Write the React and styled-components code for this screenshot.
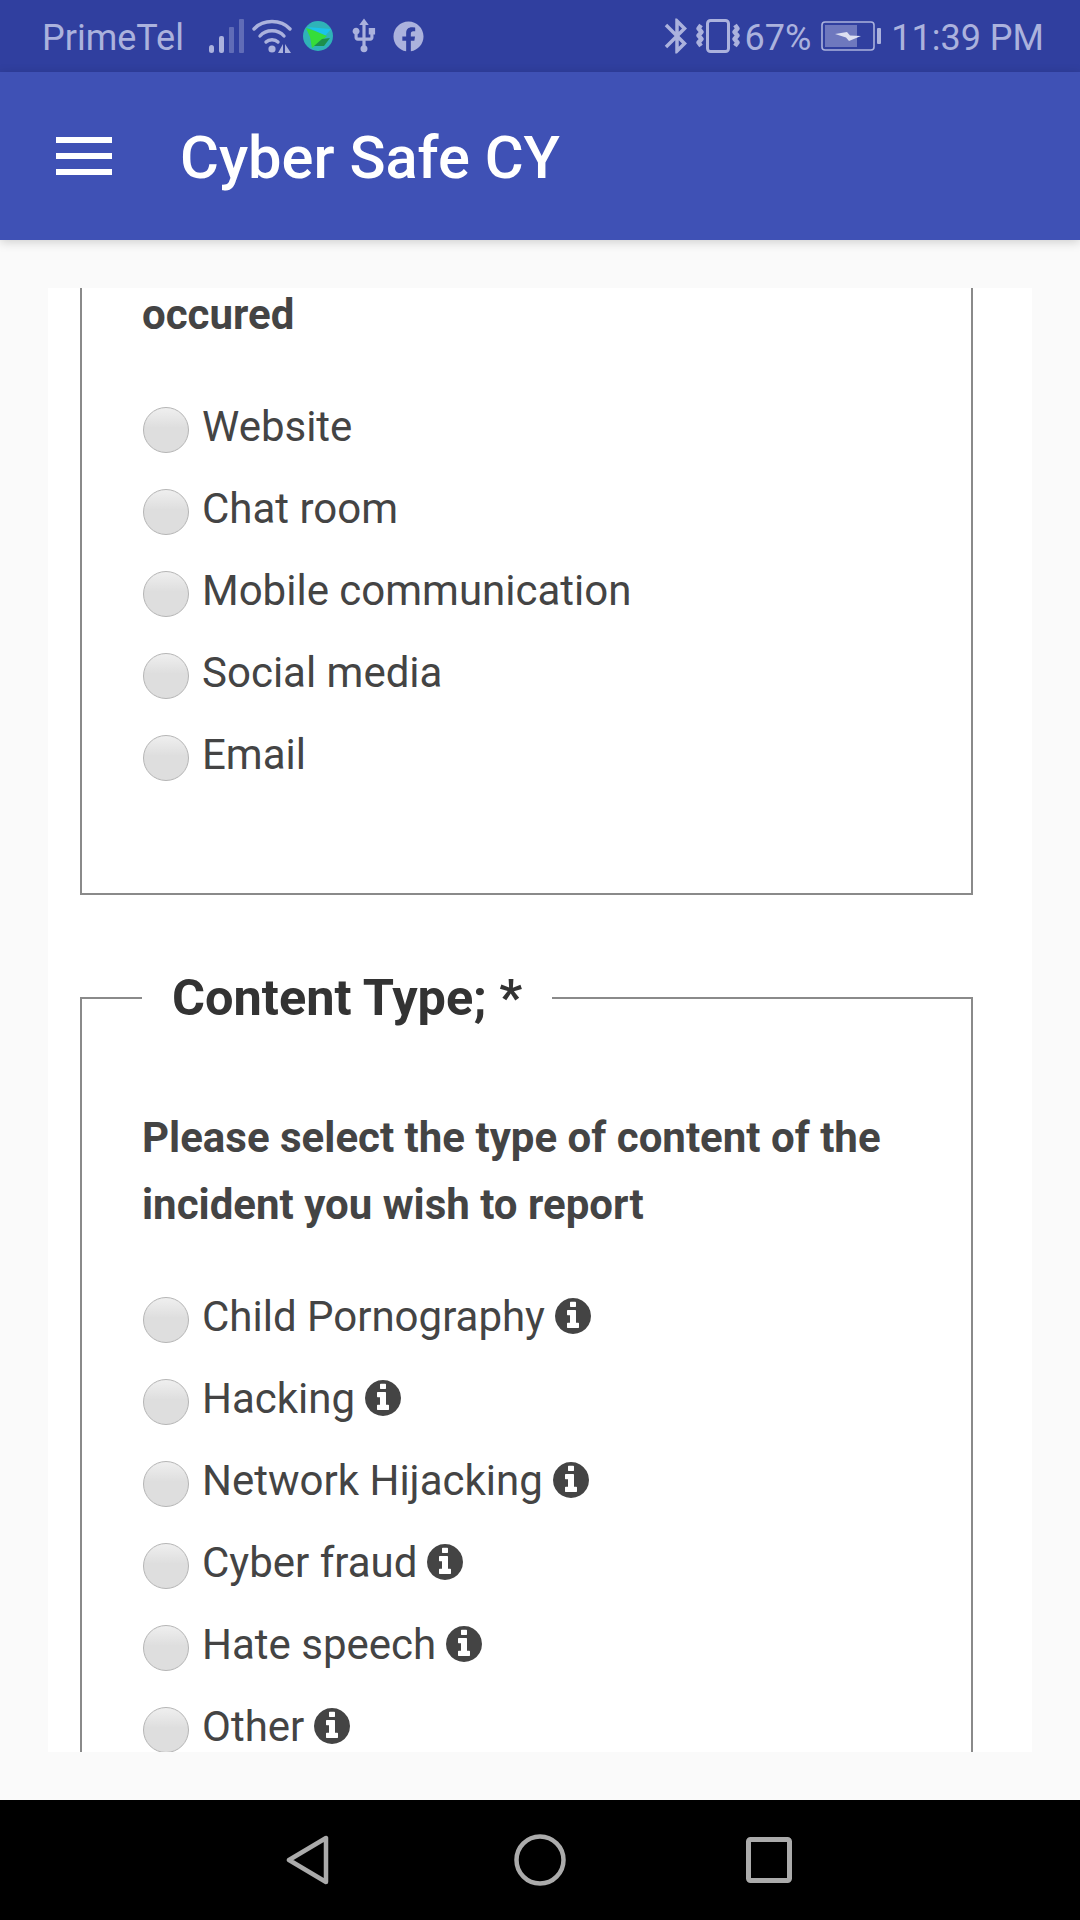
import React from "react";
import styled, { createGlobalStyle } from "styled-components";
import { FaFacebook } from "react-icons/fa";
import { MdBluetooth, MdUsb } from "react-icons/md";

const Global = createGlobalStyle`
  html, body { margin: 0; padding: 0; background: #fafafa; }
  * { box-sizing: border-box; }
`;

const Screen = styled.div`
  width: 1080px;
  height: 1920px;
  display: flex;
  flex-direction: column;
  font-family: Roboto, "Liberation Sans", sans-serif;
  background: #fafafa;
  overflow: hidden;
`;

const StatusBar = styled.div`
  height: 72px;
  flex: none;
  background: #303f9f;
  display: flex;
  align-items: center;
  justify-content: space-between;
  padding: 0 36px 0 42px;
  color: #abb2dd;
  font-size: 36px;
`;

const StatusGroup = styled.div`
  display: flex;
  align-items: center;
`;

const StatusText = styled.span`
  margin-left: ${(p) => p.$gap || 0}px;
  line-height: 72px;
  padding-top: 3px;
  white-space: nowrap;
`;

const StatusIcon = styled.span`
  display: flex;
  margin-left: ${(p) => p.$gap || 0}px;
  color: #abb2dd;
`;

const AppBar = styled.header`
  height: 168px;
  flex: none;
  background: #3f51b5;
  display: flex;
  align-items: center;
  padding-left: 56px;
  box-shadow: 0 2px 10px rgba(0, 0, 0, 0.18);
  position: relative;
  z-index: 1;
`;

const Burger = styled.div`
  width: 56px;
  height: 38px;
  display: flex;
  flex-direction: column;
  justify-content: space-between;
  margin-right: 68px;
  span { display: block; height: 6px; background: #fff; }
`;

const Title = styled.h1`
  margin: 3px 0 0;
  font-size: 59.6px;
  font-weight: 500;
  color: #fff;
`;

const Main = styled.main`
  flex: 1;
  min-height: 0;
  padding: 48px;
  display: flex;
`;

const Card = styled.div`
  flex: 1;
  background: #fff;
  overflow: hidden;
  padding: 0 59px 0 32px;
`;

const Group = styled.fieldset`
  margin: 0;
  min-width: 0;
  border: 2px solid #8a8a8a;
  padding: 0 59px 120px 60px;
  ${(p) => p.$continued && "border-top: none; height: 607px;"}
  ${(p) => p.$next && "margin-top: 75px;"}
`;

const Legend = styled.legend`
  padding: 0 30px;
  font-size: 50.5px;
  font-weight: 700;
  color: #333;
  line-height: 56px;
`;

const Prompt = styled.p`
  margin: ${(p) => (p.$continued ? "-7px 0 0" : "78px 0 0")};
  font-size: 42px;
  font-weight: 700;
  line-height: 67px;
  color: #444;
`;

const Options = styled.div`
  margin-top: ${(p) => p.$top}px;
  display: flex;
  flex-direction: column;
`;

const Option = styled.label`
  height: 82px;
  display: flex;
  align-items: center;
  font-size: 42px;
  color: #444;
`;

const Radio = styled.input.attrs({ type: "radio" })`
  appearance: none;
  width: 46px;
  height: 46px;
  margin: 8px 13px 0 1px;
  flex: none;
  border-radius: 50%;
  border: 1px solid #b5b5b5;
  background: linear-gradient(#efefef, #dedede 45%, #dedede);
`;

const InfoSvg = styled.svg`
  width: 36px;
  height: 36px;
  margin-left: 10px;
  fill: #444;
`;

const Info = () => (
  <InfoSvg viewBox="128 128 1536 1536">
    <path d="M1152 1376v-160q0-14-9-23t-23-9h-96v-512q0-14-9-23t-23-9h-320q-14 0-23 9t-9 23v160q0 14 9 23t23 9h96v320h-96q-14 0-23 9t-9 23v160q0 14 9 23t23 9h448q14 0 23-9t9-23zm-128-896v-160q0-14-9-23t-23-9h-192q-14 0-23 9t-9 23v160q0 14 9 23t23 9h192q14 0 23-9t9-23zm640 416q0 209-103 385.500t-279.500 279.500-385.500 103-385.500-103-279.500-279.500-103-385.500 103-385.500 279.500-279.500 385.500-103 385.500 103 279.500 279.500 103 385.500z" />
  </InfoSvg>
);

const NavBar = styled.nav`
  height: 120px;
  flex: none;
  background: #000;
  display: flex;
  align-items: center;
  justify-content: center;
  padding-right: 3px;
`;

const NavSlot = styled.span`
  display: flex;
  margin-left: ${(p) => p.$gap || 0}px;
`;

const Signal = () => (
  <svg width="36" height="34" viewBox="0 0 36 34">
    <g fill="#abb2dd">
      <rect x="0" y="26" width="5" height="8" rx="2.5" />
      <rect x="10" y="17" width="5" height="17" rx="2" />
      <rect x="20" y="8" width="5" height="26" rx="1" fillOpacity="0.4" />
      <rect x="30" y="0" width="5" height="34" rx="1" fillOpacity="0.4" />
    </g>
  </svg>
);

const Wifi = () => (
  <svg width="40" height="34" viewBox="0 0 40 34">
    <g fill="none" stroke="#abb2dd" strokeWidth="3.4" strokeLinecap="round">
      <path d="M2 10 C11 0 29 0 38 10" />
      <path d="M8 17 C14 10 26 10 32 17" />
      <path d="M14 23 C17 20 23 20 26 23" />
    </g>
    <circle cx="20" cy="30" r="3.6" fill="#abb2dd" />
    <path d="M31 25 V34 H26 Z M33 25 V34 H39 Z" fill="#abb2dd" />
  </svg>
);

const Globe = () => (
  <svg width="30" height="30" viewBox="0 0 30 30">
    <circle cx="15" cy="15" r="15" fill="#2fb3b8" />
    <path d="M4 6 L28 8 L22 15 L12 10 Z" fill="#1cc3e8" />
    <path d="M3 7 L12 10 L24 15 L16 22 L9 27 L7 16 Z" fill="#35dd3a" />
    <path d="M11 25 L19 18 L27 17 L21 25 Z" fill="#1d8f4c" />
  </svg>
);

const Vibrate = () => (
  <svg width="44" height="34" viewBox="0 0 44 34">
    <rect x="11.5" y="1.5" width="21" height="31" rx="3" fill="none" stroke="#abb2dd" strokeWidth="3" />
    <g fill="none" stroke="#abb2dd" strokeWidth="4.4" strokeLinejoin="round">
      <path d="M5 6 L2.5 9.5 L5.5 13 L2.5 16.5 L5.5 20 L2.5 23.5 L5 27" />
      <path d="M39 6 L41.5 9.5 L38.5 13 L41.5 16.5 L38.5 20 L41.5 23.5 L39 27" />
    </g>
  </svg>
);

const Battery = () => (
  <svg width="61" height="30" viewBox="0 0 61 30">
    <rect x="1" y="1" width="52" height="28" rx="3" fill="none" stroke="#abb2dd" strokeWidth="1.6" />
    <rect x="4" y="4" width="32" height="22" fill="#abb2dd" fillOpacity="0.5" />
    <path d="M14 13 L26 11 L29 14.5 L40 15 L28 20 L25 16.5 Z" fill="#dde0f2" />
    <rect x="56" y="7" width="4" height="16" rx="1" fill="#abb2dd" />
  </svg>
);

const Back = () => (
  <svg width="44" height="52" viewBox="0 0 44 52">
    <path d="M40 4 V48 L3 26 Z" fill="none" stroke="#ababab" strokeWidth="4.5" strokeLinejoin="round" />
  </svg>
);

const Home = () => (
  <svg width="52" height="52" viewBox="0 0 52 52">
    <circle cx="26" cy="26" r="23.5" fill="none" stroke="#ababab" strokeWidth="4.5" />
  </svg>
);

const Recent = () => (
  <svg width="46" height="46" viewBox="0 0 46 46">
    <rect x="2.5" y="2.5" width="41" height="41" rx="2" fill="none" stroke="#ababab" strokeWidth="5" />
  </svg>
);

const places = ["Website", "Chat room", "Mobile communication", "Social media", "Email"];
const types = ["Child Pornography", "Hacking", "Network Hijacking", "Cyber fraud", "Hate speech", "Other"];

export default function App() {
  return (
    <Screen>
      <Global />
      <StatusBar>
        <StatusGroup>
          <StatusText>PrimeTel</StatusText>
          <StatusIcon $gap={25}><Signal /></StatusIcon>
          <StatusIcon $gap={7}><Wifi /></StatusIcon>
          <StatusIcon $gap={11}><Globe /></StatusIcon>
          <StatusIcon $gap={12}><MdUsb size={38} /></StatusIcon>
          <StatusIcon $gap={10}><FaFacebook size={31} /></StatusIcon>
        </StatusGroup>
        <StatusGroup>
          <StatusIcon><MdBluetooth size={42} /></StatusIcon>
          <StatusIcon $gap={-2}><Vibrate /></StatusIcon>
          <StatusText $gap={4}>67%</StatusText>
          <StatusIcon $gap={10}><Battery /></StatusIcon>
          <StatusText $gap={9}>11:39 PM</StatusText>
        </StatusGroup>
      </StatusBar>
      <AppBar>
        <Burger><span /><span /><span /></Burger>
        <Title>Cyber Safe CY</Title>
      </AppBar>
      <Main>
        <Card>
          <Group $continued>
            <Prompt $continued>occured</Prompt>
            <Options $top={37}>
              {places.map((t) => (
                <Option key={t}><Radio name="place" />{t}</Option>
              ))}
            </Options>
          </Group>
          <Group $next>
            <Legend>Content Type; *</Legend>
            <Prompt>Please select the type of content of the incident you wish to report</Prompt>
            <Options $top={37}>
              {types.map((t) => (
                <Option key={t}><Radio name="type" />{t}<Info /></Option>
              ))}
            </Options>
          </Group>
        </Card>
      </Main>
      <NavBar>
        <NavSlot><Back /></NavSlot>
        <NavSlot $gap={184}><Home /></NavSlot>
        <NavSlot $gap={180}><Recent /></NavSlot>
      </NavBar>
    </Screen>
  );
}
